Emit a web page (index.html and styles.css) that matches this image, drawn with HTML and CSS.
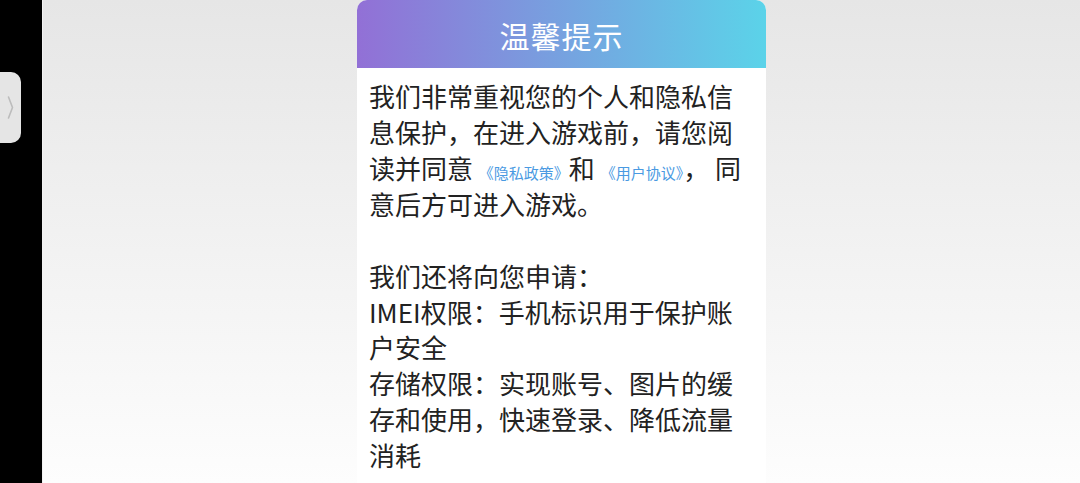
FILE: index.html
```html
<!DOCTYPE html>
<html lang="zh-CN">
<head>
    <meta charset="UTF-8">
    <meta name="viewport" content="width=device-width, initial-scale=1.0">
    <title>温馨提示</title>
    <link rel="stylesheet" href="styles.css">
</head>
<body>
    <div class="side-bar">
        <div class="side-tab">
            <svg width="21" height="71" viewBox="0 0 21 71">
                <polyline points="8.5,25 12.5,35.5 8.5,46" fill="none" stroke="#bcbcbc" stroke-width="1.6" stroke-linecap="round" stroke-linejoin="round"/>
            </svg>
        </div>
    </div>

    <main>
        <div class="dialog">
            <div class="dialog-header">温馨提示</div>
            <div class="dialog-body">
                <p>我们非常重视您的个人和隐私信息保护，在进入游戏前，请您阅读并同意 <a class="link" href="#">《隐私政策》</a>和 <a class="link" href="#">《用户协议》</a>， 同意后方可进入游戏。</p>
                <p class="gap">我们还将向您申请：</p>
                <p>IMEI权限：手机标识用于保护账户安全</p>
                <p>存储权限：实现账号、图片的缓存和使用，快速登录、降低流量消耗</p>
            </div>
        </div>
    </main>
</body>
</html>
```

FILE: styles.css
```css
html, body {
    height: 100%;
}

body {
    margin: 0;
    display: flex;
    font-family: "Noto Sans CJK SC", "Noto Sans", sans-serif;
    background: linear-gradient(to bottom, #e6e6e6, #fdfdfd);
    overflow: hidden;
}

.side-bar {
    width: 42px;
    flex-shrink: 0;
    background-color: #000;
    position: relative;
    border-right: 1px solid #f2f2f2;
}

.side-tab {
    position: absolute;
    top: 72px;
    left: 0;
    width: 21px;
    height: 71px;
    background-color: #e5e5e5;
    border-radius: 0 10px 10px 0;
}

.side-tab svg {
    display: block;
}

main {
    flex: 1;
    display: flex;
    justify-content: center;
}

.dialog {
    width: 409px;
    background-color: #fff;
    border-radius: 10px 10px 0 0;
    overflow: hidden;
    align-self: flex-start;
    min-height: 100%;
}

.dialog-header {
    height: 68px;
    background: linear-gradient(to right, #9270d6, #5bd3e9);
    color: #fff;
    font-size: 30px;
    line-height: 70px;
    text-align: center;
    letter-spacing: 1px;
}

.dialog-body {
    padding: 10px 12px 0;
    color: #222;
    font-size: 26px;
    line-height: 35.9px;
}

.dialog-body p {
    margin: 0;
}

.dialog-body .gap {
    margin-top: 36px;
}

.link {
    color: #4a9ae2;
    font-size: 15px;
    line-height: 1;
    text-decoration: none;
}
```
